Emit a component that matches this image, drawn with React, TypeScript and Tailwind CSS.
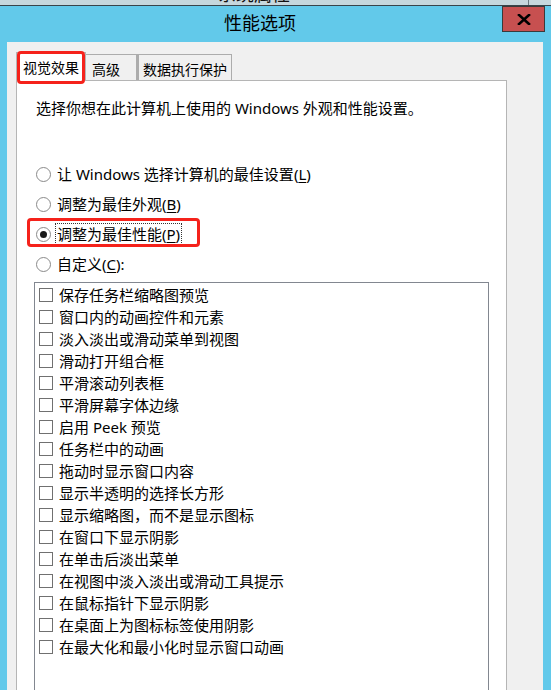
import React from 'react';

const FONT = '"Noto Sans", "Noto Sans CJK SC", sans-serif';

const EFFECTS = [
  '保存任务栏缩略图预览',
  '窗口内的动画控件和元素',
  '淡入淡出或滑动菜单到视图',
  '滑动打开组合框',
  '平滑滚动列表框',
  '平滑屏幕字体边缘',
  '启用 Peek 预览',
  '任务栏中的动画',
  '拖动时显示窗口内容',
  '显示半透明的选择长方形',
  '显示缩略图，而不是显示图标',
  '在窗口下显示阴影',
  '在单击后淡出菜单',
  '在视图中淡入淡出或滑动工具提示',
  '在鼠标指针下显示阴影',
  '在桌面上为图标标签使用阴影',
  '在最大化和最小化时显示窗口动画',
];

interface RadioOption {
  label: string;
  hotkey: string;
  suffix?: string;
  checked?: boolean;
  highlight?: boolean;
}

const OPTIONS: RadioOption[] = [
  { label: '让 Windows 选择计算机的最佳设置', hotkey: 'L' },
  { label: '调整为最佳外观', hotkey: 'B' },
  { label: '调整为最佳性能', hotkey: 'P', checked: true, highlight: true },
  { label: '自定义', hotkey: 'C', suffix: ':' },
];

function Radio({ checked }: { checked?: boolean }) {
  return (
    <span className="w-[15px] h-[15px] rounded-full border border-[#8a8a8a] bg-white flex items-center justify-center shrink-0">
      {checked && <span className="w-[7px] h-[7px] rounded-full bg-[#1a1a1a]" />}
    </span>
  );
}

function RadioRow({ option }: { option: RadioOption }) {
  const text = (
    <span>
      {option.label}(<span className="underline underline-offset-2">{option.hotkey}</span>){option.suffix}
    </span>
  );
  return (
    <div className="relative h-[30px] flex items-center pl-[19px] gap-[6px]">
      <Radio checked={option.checked} />
      {option.checked ? (
        <span className="outline outline-1 outline-dotted outline-[#333] px-[1px] -ml-[1px] leading-[20px]">{text}</span>
      ) : (
        <span className="leading-[20px]">{text}</span>
      )}
      {option.highlight && (
        <div className="absolute left-[10px] top-[-1px] w-[173px] h-[29px] border-[3px] border-[#f5221b] rounded-[4px]" />
      )}
    </div>
  );
}

function CheckRow({ label }: { label: string }) {
  return (
    <div className="h-[22px] flex items-center pl-[4px] gap-[6px]">
      <span className="w-[14px] h-[14px] border border-[#707070] bg-white shrink-0" />
      <span className="leading-[20px]">{label}</span>
    </div>
  );
}

export default function App() {
  return (
    <div
      className="w-[551px] h-[690px] overflow-hidden bg-[#62c9ea] text-[15px] text-black"
      style={{ fontFamily: FONT }}
    >
      {/* parent window peeking above */}
      <div className="relative h-[6px] bg-[#c6d7dd] border-b border-[#39444a] overflow-hidden">
        <span className="absolute left-[218px] top-[-17px] text-[18px] leading-[22px] text-[#111]">系统属性</span>
        <span className="absolute left-[528px] top-0 h-full w-px bg-[#6c7a80]" />
      </div>

      {/* title bar */}
      <div className="flex h-[36px]">
        <div className="w-[502px] pl-[18px] flex items-center justify-center text-[18px] pb-[1px]">性能选项</div>
        <div className="w-[43px] h-[26px] bg-[#c75050] border border-[#3a3a3a] flex items-center justify-center">
          <svg width="14" height="11" viewBox="0 0 14 11">
            <path d="M2 1 L12 10 M12 1 L2 10" stroke="#000" strokeWidth="2.6" strokeLinecap="square" />
          </svg>
        </div>
      </div>

      {/* dialog body */}
      <div className="ml-[7px] w-[536px] h-[660px] bg-[#f0f0f0] pt-[9px]">
        {/* tabs */}
        <div className="flex items-end pl-[9px] h-[29px] text-[14px] whitespace-nowrap">
          <div className="relative w-[70px] h-[29px] bg-white border border-b-0 border-[#b5b5b5] flex items-center pl-[6px] z-10 -mb-px">
            视觉效果
            <div className="absolute left-[0px] top-[-2px] w-[68px] h-[33px] border-[3px] border-[#f5221b] rounded-[4px]" />
          </div>
          <div className="w-[51px] h-[26px] bg-[#f0f0f0] border border-b-0 border-l-0 border-[#acacac] flex items-center pl-[6px] pt-[3px]">
            高级
          </div>
          <div className="w-[95px] h-[26px] bg-[#f0f0f0] border border-b-0 border-l-[2px] border-[#acacac] flex items-center pl-[4px] pt-[3px]">
            数据执行保护
          </div>
        </div>

        {/* tab page */}
        <div className="ml-[9px] w-[491px] h-[640px] bg-white border border-[#b5b5b5]">
          <p className="pl-[19px] pt-[17px] leading-[20px]">
            选择你想在此计算机上使用的 Windows 外观和性能设置。
          </p>

          <div className="mt-[41px]">
            {OPTIONS.map((o) => (
              <RadioRow key={o.hotkey} option={o} />
            ))}
          </div>

          <div className="ml-[17px] mt-[3px] w-[455px] h-[440px] border border-[#828790] pt-[1px]">
            {EFFECTS.map((e) => (
              <CheckRow key={e} label={e} />
            ))}
          </div>
        </div>
      </div>
    </div>
  );
}
